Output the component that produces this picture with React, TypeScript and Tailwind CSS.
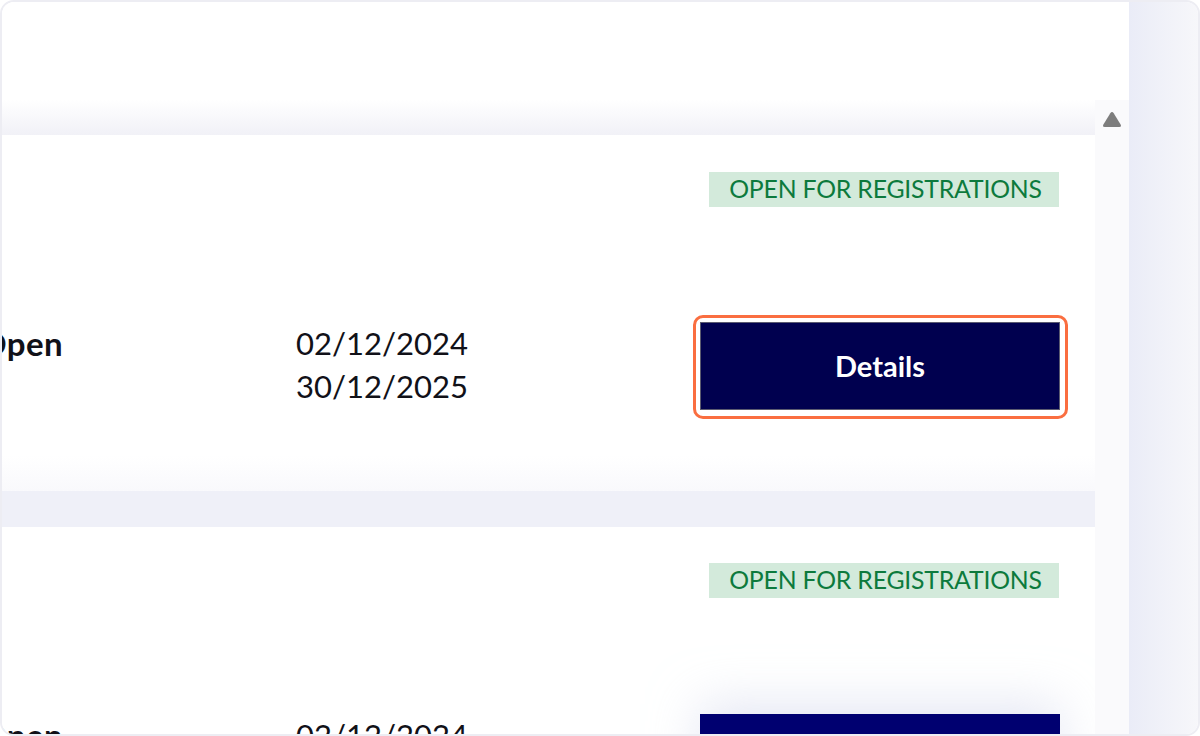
import React from "react";

function Row({ focused }: { focused?: boolean }) {
  return (
    <div className="flex items-start">
      <div className="-ml-[22px] w-[316px] shrink-0 text-[33px] font-bold leading-[43px] tracking-[0.4px] text-[#111118]">
        Open
      </div>
      <div className="text-[31px] leading-[43px] text-[#111118]">
        <div>02/12/2024</div>
        <div>30/12/2025</div>
      </div>
      <div
        className={
          focused
            ? "ml-auto mr-[27px] -mt-[7px] rounded-[10px] border-[3px] border-[#fa6e40] bg-white pt-[4px] pl-[4px] pr-[5px] pb-[6px]"
            : "ml-auto mr-[27px] -mt-[7px] rounded-[10px] border-[3px] border-transparent pt-[4px] pl-[4px] pr-[5px] pb-[6px]"
        }
      >
        <button
          className={
            focused
              ? "flex h-[88px] w-[360px] items-center justify-center border border-[#5a5a70] bg-[#00004f] text-[29px] font-bold text-white"
              : "flex h-[88px] w-[360px] items-center justify-center bg-[#000070] text-[29px] font-bold text-white shadow-[0_-10px_50px_rgba(210,214,235,0.6)]"
          }
        >
          Details
        </button>
      </div>
    </div>
  );
}

function Badge() {
  return (
    <div className="mr-[36px] flex h-[35px] w-[350px] items-center justify-center self-end bg-[#d3eadb] pl-[3px] text-[24.8px] leading-none tracking-[-0.2px] text-[#0d7a3d]">
      OPEN FOR REGISTRATIONS
    </div>
  );
}

export default function App() {
  return (
    <div className="flex h-[736px] w-[1200px] overflow-hidden rounded-[14px] border-2 border-[#ededf3] bg-white font-['Lato',sans-serif]">
      <div className="flex min-w-0 flex-1 flex-col">
        <div className="h-[98px] shrink-0 bg-white" />
        <div className="flex min-h-0 flex-1">
          <div className="flex min-w-0 flex-1 flex-col overflow-hidden">
            <div className="h-[35px] shrink-0 bg-gradient-to-b from-white to-[#f1f1f7]" />
            <div className="flex h-[356px] shrink-0 flex-col bg-[linear-gradient(to_bottom,#ffffff_90%,#f9f9fc)] pt-[37px]">
              <Badge />
              <div className="mt-[115px]">
                <Row focused />
              </div>
            </div>
            <div className="h-[36px] shrink-0 bg-[#eff0f8]" />
            <div className="flex flex-1 flex-col bg-white pt-[36px]">
              <Badge />
              <div className="mt-[116px]">
                <Row />
              </div>
            </div>
          </div>
          <div className="flex w-[34px] shrink-0 justify-center bg-[#fafafc] pt-[11px]">
            <svg width="20" height="17" viewBox="0 0 20 17">
              <path
                d="M8.3 2.2 Q10 -0.4 11.7 2.2 L18.6 13.6 Q19.8 16 17.2 16 L2.8 16 Q0.2 16 1.4 13.6 Z"
                fill="#7d7d7d"
              />
            </svg>
          </div>
        </div>
      </div>
      <div className="w-[69px] shrink-0 bg-gradient-to-r from-[#eaecf7] to-[#f7f7fa]" />
    </div>
  );
}
